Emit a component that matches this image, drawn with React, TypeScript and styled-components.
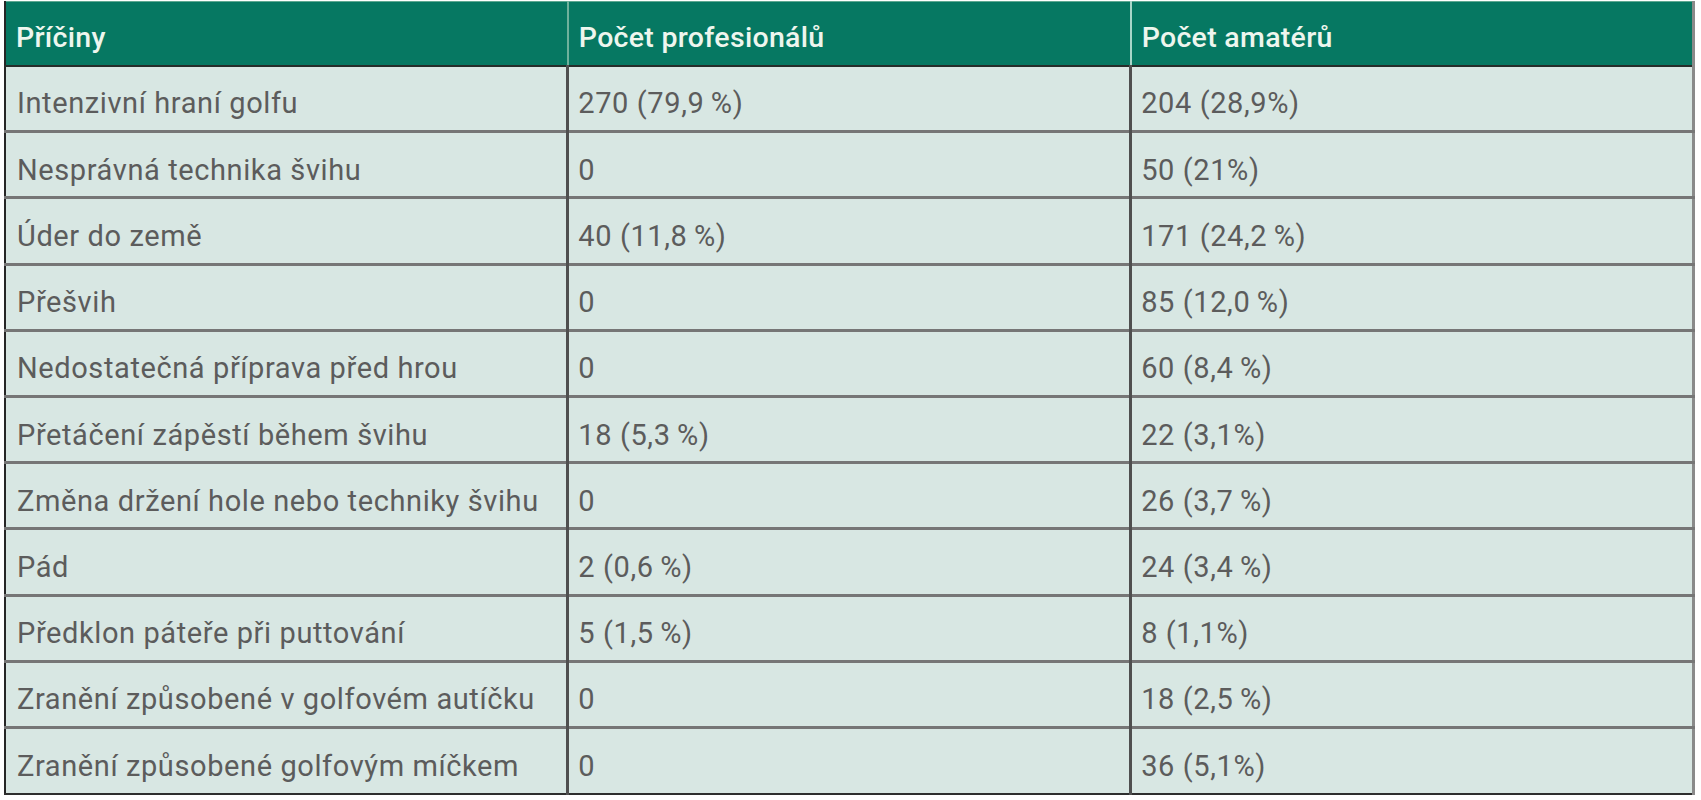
import React from "react";
import styled, { createGlobalStyle } from "styled-components";

const GlobalStyle = createGlobalStyle`
  html, body {
    margin: 0;
    padding: 0;
    background: #ffffff;
  }
`;

const Page = styled.div`
  padding: 1px 6px 5px 4px;
  font-family: Roboto, "Liberation Sans", sans-serif;
`;

const Table = styled.table`
  width: 100%;
  border-collapse: collapse;
  table-layout: fixed;
  background: #d8e7e3;
  border-left: 2px solid #262626;
  border-right: 3px solid #8a8a8a;
  border-bottom: 2px solid #2e2e2e;
`;

const HeadRow = styled.tr`
  height: 64px;
  background: #067862;
  border-top: 1px solid #5ea891;
  border-bottom: 2px solid #252d2a;
`;

const HeadCell = styled.th<{ $last?: boolean }>`
  text-align: left;
  padding: 9px 12px 0 10px;
  font-size: 28.5px;
  font-weight: 500;
  letter-spacing: 0.3px;
  color: #eef6ee;
  border-right: 2px solid ${(p) => (p.$last ? "#a8d6c8" : "#6fb19c")};
  &:last-child {
    border-right: 2px solid #9fd2c3;
  }
`;

const Row = styled.tr`
  height: 66.2px;
  border-top: 3px solid #767676;
  &:first-child {
    border-top: none;
  }
`;

const Cell = styled.td<{ $first?: boolean }>`
  padding: 10px 12px 0 ${(p) => (p.$first ? "11px" : "9px")};
  font-size: 29px;
  font-weight: 400;
  letter-spacing: 0.6px;
  color: #5c5c5c;
  white-space: nowrap;
  border-right: 3px solid #4f4f4f;
  &:last-child {
    border-right: none;
  }
`;

const rows: [string, string, string][] = [
  ["Intenzivní hraní golfu", "270 (79,9\u2009%)", "204 (28,9%)"],
  ["Nesprávná technika švihu", "0", "50 (21%)"],
  ["Úder do země", "40 (11,8\u2009%)", "171 (24,2\u2009%)"],
  ["Přešvih", "0", "85 (12,0\u2009%)"],
  ["Nedostatečná příprava před hrou", "0", "60 (8,4\u2009%)"],
  ["Přetáčení zápěstí během švihu", "18 (5,3\u2009%)", "22 (3,1%)"],
  ["Změna držení hole nebo techniky švihu", "0", "26 (3,7\u2009%)"],
  ["Pád", "2 (0,6\u2009%)", "24 (3,4\u2009%)"],
  ["Předklon páteře při puttování", "5 (1,5\u2009%)", "8 (1,1%)"],
  ["Zranění způsobené v golfovém autíčku", "0", "18 (2,5\u2009%)"],
  ["Zranění způsobené golfovým míčkem", "0", "36 (5,1%)"],
];

const App: React.FC = () => {
  return (
    <>
      <GlobalStyle />
      <Page>
        <Table>
          <thead>
            <HeadRow>
              <HeadCell>Příčiny</HeadCell>
              <HeadCell $last>Počet profesionálů</HeadCell>
              <HeadCell>Počet amatérů</HeadCell>
            </HeadRow>
          </thead>
          <tbody>
            {rows.map(([cause, pro, amateur]) => (
              <Row key={cause}>
                <Cell $first>{cause}</Cell>
                <Cell>{pro}</Cell>
                <Cell>{amateur}</Cell>
              </Row>
            ))}
          </tbody>
        </Table>
      </Page>
    </>
  );
};

export default App;
